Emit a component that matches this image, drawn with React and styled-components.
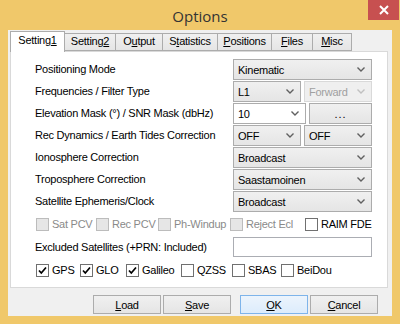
import React from "react";
import styled, { createGlobalStyle } from "styled-components";

const GlobalStyle = createGlobalStyle`
  body {
    margin: 0;
    background: #f0c86a;
  }
  * {
    box-sizing: border-box;
  }
`;

const Frame = styled.div`
  width: 400px;
  height: 324px;
  display: flex;
  flex-direction: column;
  background: #f0c86a;
  padding: 0 8px 8px 8px;
  font-family: "Liberation Sans", Arial, sans-serif;
  font-size: 11px;
  letter-spacing: -0.25px;
  color: #000;
`;

const TitleBar = styled.div`
  height: 30px;
  display: grid;
  grid-template-columns: 1fr auto 1fr;
  align-items: center;
`;

const Title = styled.div`
  grid-column: 2;
  font-family: "Open Sans", "Noto Sans", sans-serif;
  font-size: 15px;
  letter-spacing: 0;
  color: #333;
  padding-top: 1px;
`;

const CloseButton = styled.div`
  grid-column: 3;
  justify-self: end;
  align-self: start;
  width: 31px;
  height: 20px;
  margin-right: -7px;
  background: #c75050;
  display: flex;
  align-items: center;
  justify-content: center;
`;

const Client = styled.div`
  flex: 1;
  background: #f0f0f0;
  display: flex;
  flex-direction: column;
  padding: 1px 4px 0 2px;
`;

const TabRow = styled.div`
  display: flex;
  align-items: flex-end;
  height: 20px;
  padding-left: 1px;
`;

const Tab = styled.div`
  width: ${(p) => p.$w}px;
  height: ${(p) => (p.$active ? 21 : 18)}px;
  margin-bottom: ${(p) => (p.$active ? -1 : 0)}px;
  margin-left: -1px;
  position: relative;
  z-index: ${(p) => (p.$active ? 2 : 1)};
  background: ${(p) =>
    p.$active ? "#fff" : "linear-gradient(#f0f0f0, #e5e5e5)"};
  border: 1px solid #acacac;
  border-bottom: ${(p) => (p.$active ? "none" : "1px solid #acacac")};
  display: flex;
  justify-content: center;
  padding-top: ${(p) => (p.$active ? 2 : 1)}px;
  white-space: nowrap;
`;

const Panel = styled.div`
  height: 237px;
  background: #fff;
  border: 1px solid #d9d9d9;
  padding: 7px 15px 0 24px;
  display: flex;
  flex-direction: column;
`;

const Row = styled.div`
  height: ${(p) => p.$h || 22}px;
  display: flex;
  align-items: ${(p) => (p.$top ? "flex-start" : "center")};
`;

const Label = styled.div`
  flex: 1;
  white-space: nowrap;
  line-height: 21px;
`;

const Controls = styled.div`
  width: 139px;
  display: flex;
  gap: 3px;
`;

const Combo = styled.div`
  flex: 1;
  height: 21px;
  display: flex;
  align-items: center;
  justify-content: space-between;
  padding: 0 6px 0 4px;
  border: 1px solid ${(p) => (p.$disabled ? "#d9d9d9" : "#acacac")};
  background: ${(p) =>
    p.$disabled
      ? "#efefef"
      : p.$edit
      ? "#fff"
      : "linear-gradient(#f0f0f0, #e5e5e5)"};
  color: ${(p) => (p.$disabled ? "#a0a0a0" : "#000")};
`;

const PushButton = styled.div`
  flex: 1;
  height: 21px;
  display: flex;
  align-items: center;
  justify-content: center;
  border: 1px solid #acacac;
  background: linear-gradient(#f0f0f0, #e5e5e5);
  letter-spacing: 1px;
`;

const TextInput = styled.div`
  width: 139px;
  height: 20px;
  border: 1px solid #abadb3;
  background: #fff;
`;

const CheckRow = styled.div`
  display: flex;
  align-items: center;
  margin-left: 1px;
`;

const Check = styled.div`
  width: ${(p) => (p.$w ? `${p.$w}px` : "auto")};
  display: flex;
  align-items: center;
  gap: 3px;
  color: ${(p) => (p.$disabled ? "#8a8a8a" : "#000")};
  white-space: nowrap;
`;

const Box = styled.div`
  width: 13px;
  height: 13px;
  border: 1px solid ${(p) => (p.$disabled ? "#bcbcbc" : "#707070")};
  background: ${(p) => (p.$disabled ? "#e6e6e6" : "#fff")};
  display: flex;
  align-items: center;
  justify-content: center;
`;

const ButtonBar = styled.div`
  flex: 1;
  display: flex;
  justify-content: flex-end;
  align-items: flex-start;
  padding: 7px 10px 0 0;
`;

const DialogButton = styled.div`
  width: 68px;
  height: 19px;
  margin-left: ${(p) => p.$gap || 2}px;
  display: flex;
  align-items: center;
  justify-content: center;
  border: 1px solid ${(p) => (p.$default ? "#7eb4ea" : "#acacac")};
  background: ${(p) =>
    p.$default ? "linear-gradient(#ecf4fc, #dcecfc)" : "linear-gradient(#f0f0f0, #e5e5e5)"};
`;

const Chevron = ({ color = "#606060" }) => (
  <svg width="8" height="5" viewBox="0 0 8 5">
    <polyline
      points="0.5,0.5 4,4 7.5,0.5"
      fill="none"
      stroke={color}
      strokeWidth="1.4"
    />
  </svg>
);

const Tick = () => (
  <svg width="11" height="11" viewBox="0 0 11 11">
    <polyline
      points="2,5.5 4.3,8 9,2.5"
      fill="none"
      stroke="#000"
      strokeWidth="1.7"
    />
  </svg>
);

const Select = ({ value, edit, disabled }) => (
  <Combo $edit={edit} $disabled={disabled}>
    <span>{value}</span>
    <Chevron color={disabled ? "#c0c0c0" : "#606060"} />
  </Combo>
);

const CheckItem = ({ label, w, checked, disabled }) => (
  <Check $w={w} $disabled={disabled}>
    <Box $disabled={disabled}>{checked && <Tick />}</Box>
    {label}
  </Check>
);

const tabs = [
  { label: <>Setting<u>1</u></>, w: 55, active: true },
  { label: <>Setting<u>2</u></>, w: 52 },
  { label: <>O<u>u</u>tput</>, w: 48 },
  { label: <>S<u>t</u>atistics</>, w: 56 },
  { label: <><u>P</u>ositions</>, w: 55 },
  { label: <><u>F</u>iles</>, w: 42 },
  { label: <><u>M</u>isc</>, w: 40 },
];

const rows = [
  { label: "Positioning Mode", controls: [{ value: "Kinematic" }] },
  {
    label: "Frequencies / Filter Type",
    controls: [{ value: "L1" }, { value: "Forward", disabled: true }],
  },
  {
    label: "Elevation Mask (°) / SNR Mask (dbHz)",
    controls: [{ value: "10", edit: true }, { button: "..." }],
  },
  {
    label: "Rec Dynamics / Earth Tides Correction",
    controls: [{ value: "OFF" }, { value: "OFF" }],
  },
  { label: "Ionosphere Correction", controls: [{ value: "Broadcast" }] },
  { label: "Troposphere Correction", controls: [{ value: "Saastamoinen" }] },
  { label: "Satellite Ephemeris/Clock", controls: [{ value: "Broadcast" }] },
];

export default function App() {
  return (
    <>
      <GlobalStyle />
      <Frame>
        <TitleBar>
          <Title>Options</Title>
          <CloseButton>
            <svg width="10" height="10" viewBox="0 0 10 10">
              <path d="M1 1 L9 9 M9 1 L1 9" stroke="#fff" strokeWidth="2" />
            </svg>
          </CloseButton>
        </TitleBar>
        <Client>
          <TabRow>
            {tabs.map((t, i) => (
              <Tab key={i} $w={t.w} $active={t.active}>
                {t.label}
              </Tab>
            ))}
          </TabRow>
          <Panel>
            {rows.map((r) => (
              <Row key={r.label} $top>
                <Label>{r.label}</Label>
                <Controls>
                  {r.controls.map((c, i) =>
                    c.button ? (
                      <PushButton key={i}>{c.button}</PushButton>
                    ) : (
                      <Select key={i} {...c} />
                    )
                  )}
                </Controls>
              </Row>
            ))}
            <Row>
              <CheckRow>
                <CheckItem label="Sat PCV" w={60} disabled />
                <CheckItem label="Rec PCV" w={62} disabled />
                <CheckItem label="Ph-Windup" w={72} disabled />
                <CheckItem label="Reject Ecl" w={75} disabled />
                <CheckItem label="RAIM FDE" />
              </CheckRow>
            </Row>
            <Row $h={24}>
              <Label>Excluded Satellites (+PRN: Included)</Label>
              <TextInput />
            </Row>
            <Row>
              <CheckRow>
                <CheckItem label="GPS" w={44} checked />
                <CheckItem label="GLO" w={46} checked />
                <CheckItem label="Galileo" w={55} checked />
                <CheckItem label="QZSS" w={51} />
                <CheckItem label="SBAS" w={49} />
                <CheckItem label="BeiDou" />
              </CheckRow>
            </Row>
          </Panel>
          <ButtonBar>
            <DialogButton><u>L</u>oad</DialogButton>
            <DialogButton><u>S</u>ave</DialogButton>
            <DialogButton $default $gap={9}><u>O</u>K</DialogButton>
            <DialogButton><u>C</u>ancel</DialogButton>
          </ButtonBar>
        </Client>
      </Frame>
    </>
  );
}
